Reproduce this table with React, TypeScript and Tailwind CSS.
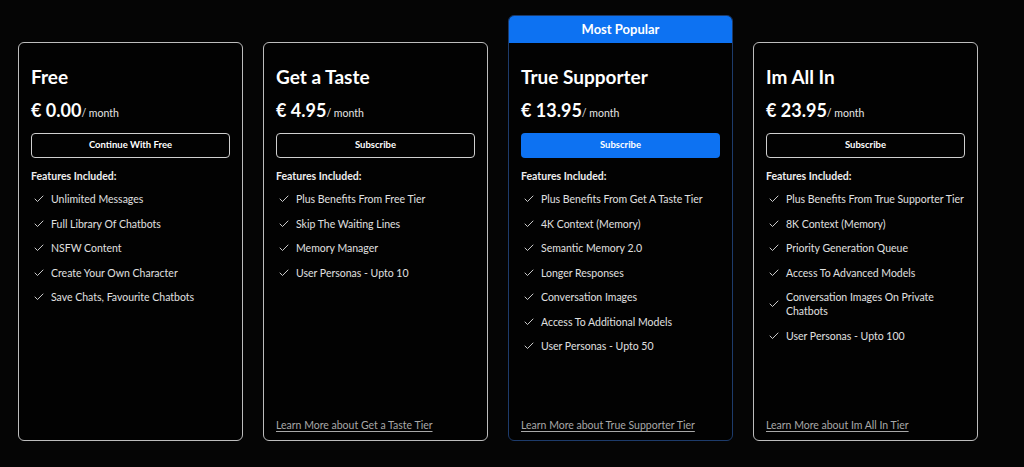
import { Check } from 'lucide-react';

interface Tier {
  name: string;
  price: string;
  cta: string;
  features: string[];
  learnMore?: string;
  popular?: boolean;
}

const tiers: Tier[] = [
  {
    name: 'Free',
    price: '€ 0.00',
    cta: 'Continue With Free',
    features: [
      'Unlimited Messages',
      'Full Library Of Chatbots',
      'NSFW Content',
      'Create Your Own Character',
      'Save Chats, Favourite Chatbots',
    ],
  },
  {
    name: 'Get a Taste',
    price: '€ 4.95',
    cta: 'Subscribe',
    features: ['Plus Benefits From Free Tier', 'Skip The Waiting Lines', 'Memory Manager', 'User Personas - Upto 10'],
    learnMore: 'Learn More about Get a Taste Tier',
  },
  {
    name: 'True Supporter',
    price: '€ 13.95',
    cta: 'Subscribe',
    popular: true,
    features: [
      'Plus Benefits From Get A Taste Tier',
      '4K Context (Memory)',
      'Semantic Memory 2.0',
      'Longer Responses',
      'Conversation Images',
      'Access To Additional Models',
      'User Personas - Upto 50',
    ],
    learnMore: 'Learn More about True Supporter Tier',
  },
  {
    name: 'Im All In',
    price: '€ 23.95',
    cta: 'Subscribe',
    features: [
      'Plus Benefits From True Supporter Tier',
      '8K Context (Memory)',
      'Priority Generation Queue',
      'Access To Advanced Models',
      'Conversation Images On Private Chatbots',
      'User Personas - Upto 100',
    ],
    learnMore: 'Learn More about Im All In Tier',
  },
];

function TierCard({ tier }: { tier: Tier }) {
  return (
    <div
      className={
        tier.popular
          ? 'flex w-[225px] flex-col overflow-hidden rounded-[6px] border border-[#1d3b6b] bg-[#020202]'
          : 'flex w-[225px] flex-col overflow-hidden rounded-[6px] border border-[#bdbdbd] bg-[#020202]'
      }
    >
      {tier.popular && (
        <div className="flex h-[27px] items-center justify-center bg-[#0d72f2] text-[13px] font-bold text-white">
          Most Popular
        </div>
      )}
      <div className="flex h-[397px] flex-col px-[12px] pb-[8px] pt-[22px]">
        <h2 className="text-[19px] font-bold leading-[24px] text-white">{tier.name}</h2>
        <div className="mt-[9px] flex items-baseline leading-[24px]">
          <span className="text-[18px] font-bold text-white">{tier.price}</span>
          <span className="text-[10.5px] text-[#e5e5e5]">/ month</span>
        </div>
        <button
          className={
            tier.popular
              ? 'mt-[8px] h-[25px] rounded-[4px] bg-[#0d72f2] text-[9.5px] font-bold text-white'
              : 'mt-[8px] h-[25px] rounded-[4px] border border-[#cfcfcf] text-[9.5px] font-bold text-white'
          }
        >
          {tier.cta}
        </button>
        <p className="mt-[11px] text-[10.5px] font-bold leading-[14px] text-[#eeeeee]">Features Included:</p>
        <ul className="mt-[9px] flex flex-col gap-[10.5px]">
          {tier.features.map((f) => (
            <li key={f} className="flex items-center gap-[6px] pl-[2px] text-[10.5px] leading-[14px] text-[#e0e0e0]">
              <Check className="h-[12px] w-[12px] shrink-0" strokeWidth={1.8} />
              <span>{f}</span>
            </li>
          ))}
        </ul>
        {tier.learnMore && (
          <a className="mt-auto text-[10.5px] leading-[14px] text-[#a8a8a8] underline underline-offset-2">{tier.learnMore}</a>
        )}
      </div>
    </div>
  );
}

export default function App() {
  return (
    <div
      className="flex h-[467px] w-[1024px] items-end gap-[20px] bg-[#050505] pb-[26px] pl-[18px]"
      style={{ fontFamily: 'Lato, "Noto Sans", sans-serif' }}
    >
      {tiers.map((t) => (
        <TierCard key={t.name} tier={t} />
      ))}
    </div>
  );
}
